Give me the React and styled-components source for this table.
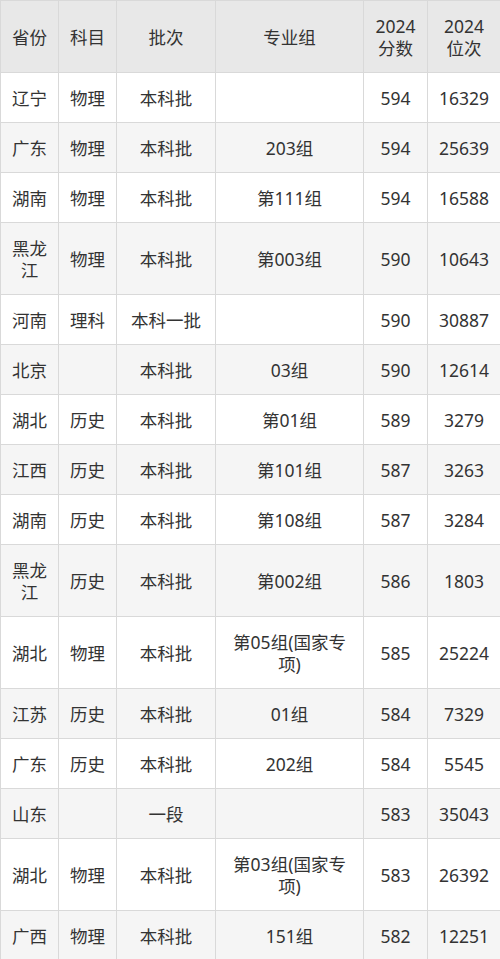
import React from 'react';
import styled, { createGlobalStyle } from 'styled-components';

const GlobalStyle = createGlobalStyle`
  body {
    margin: 0;
    background: #fff;
    font-family: "Noto Sans", "Noto Sans CJK SC", sans-serif;
  }
`;

const Table = styled.table`
  width: 500px;
  table-layout: fixed;
  border-collapse: collapse;
  color: #333;
  font-size: 17.5px;
  line-height: 22px;
`;

const HeadCell = styled.th`
  background-color: #e8e8e8;
  font-weight: normal;
  border: 1px solid #d9d9d9;
  padding: 13px 8px;
  height: 72px;
  box-sizing: border-box;
  text-align: center;
`;

const Row = styled.tr`
  background-color: ${(props) => (props.$striped ? '#f5f5f5' : '#fff')};
`;

const Cell = styled.td`
  border: 1px solid #d9d9d9;
  padding: 13.5px 10px;
  text-align: center;
  word-break: break-all;
`;

const columns = [
  { label: '省份', width: 58 },
  { label: '科目', width: 58 },
  { label: '批次', width: 99 },
  { label: '专业组', width: 148 },
  { label: ['2024', '分数'], width: 64 },
  { label: ['2024', '位次'], width: 73 },
];

const rows = [
  ['辽宁', '物理', '本科批', '', '594', '16329'],
  ['广东', '物理', '本科批', '203组', '594', '25639'],
  ['湖南', '物理', '本科批', '第111组', '594', '16588'],
  ['黑龙江', '物理', '本科批', '第003组', '590', '10643'],
  ['河南', '理科', '本科一批', '', '590', '30887'],
  ['北京', '', '本科批', '03组', '590', '12614'],
  ['湖北', '历史', '本科批', '第01组', '589', '3279'],
  ['江西', '历史', '本科批', '第101组', '587', '3263'],
  ['湖南', '历史', '本科批', '第108组', '587', '3284'],
  ['黑龙江', '历史', '本科批', '第002组', '586', '1803'],
  ['湖北', '物理', '本科批', '第05组(国家专项)', '585', '25224'],
  ['江苏', '历史', '本科批', '01组', '584', '7329'],
  ['广东', '历史', '本科批', '202组', '584', '5545'],
  ['山东', '', '一段', '', '583', '35043'],
  ['湖北', '物理', '本科批', '第03组(国家专项)', '583', '26392'],
  ['广西', '物理', '本科批', '151组', '582', '12251'],
];

const App = () => {
  return (
    <>
      <GlobalStyle />
      <Table>
        <colgroup>
          {columns.map((c, i) => (
            <col key={i} style={{ width: c.width }} />
          ))}
        </colgroup>
        <thead>
          <tr>
            {columns.map((c, i) => (
              <HeadCell key={i}>
                {Array.isArray(c.label) ? (
                  <>
                    {c.label[0]}
                    <br />
                    {c.label[1]}
                  </>
                ) : (
                  c.label
                )}
              </HeadCell>
            ))}
          </tr>
        </thead>
        <tbody>
          {rows.map((r, i) => (
            <Row key={i} $striped={i % 2 === 1}>
              {r.map((v, j) => (
                <Cell key={j}>{v}</Cell>
              ))}
            </Row>
          ))}
        </tbody>
      </Table>
    </>
  );
};

export default App;
